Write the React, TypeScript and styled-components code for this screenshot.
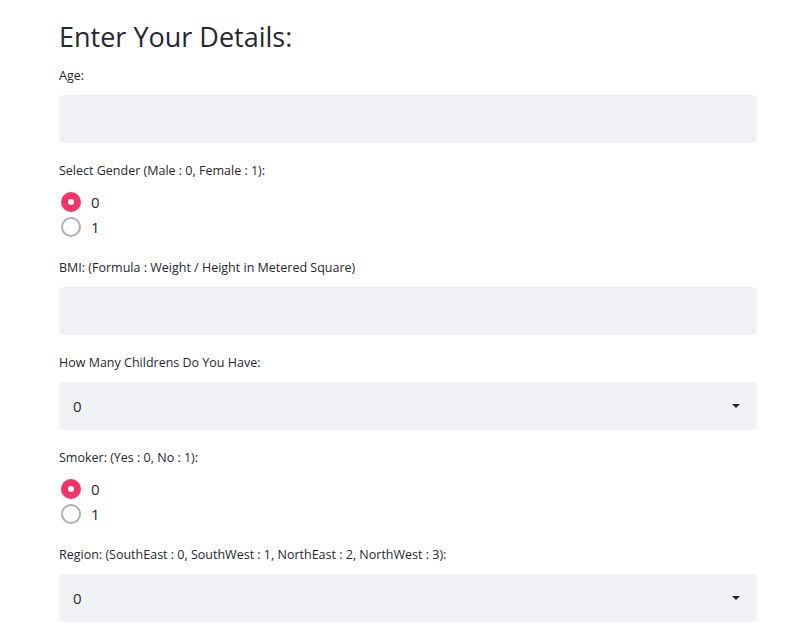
import React from "react";
import styled, { createGlobalStyle } from "styled-components";

const Global = createGlobalStyle`
  html, body { margin: 0; padding: 0; background: #ffffff; }
  body { font-family: "Open Sans", "Noto Sans", sans-serif; color: #262730; }
`;

const Page = styled.div`
  width: 698px;
  padding: 18px 0 0 59px;
  display: flex;
  flex-direction: column;
`;

const Heading = styled.h2`
  margin: 0 0 12px 0;
  font-size: 27px;
  font-weight: 400;
  line-height: 38px;
  letter-spacing: 0;
  color: #262730;
`;

const Field = styled.div`
  display: flex;
  flex-direction: column;
  margin-bottom: 20px;
`;

const Label = styled.label`
  font-size: 12.5px;
  line-height: 16px;
  color: #262730;
  margin-bottom: 11px;
`;

const Input = styled.div`
  height: 48px;
  background: #f0f2f6;
  border-radius: 4px;
`;

const Select = styled.div`
  height: 48px;
  background: #f0f2f6;
  border-radius: 4px;
  display: flex;
  align-items: center;
  justify-content: space-between;
  padding: 0 16px 0 14px;
  font-size: 15px;
  color: #262730;
`;

const Caret = styled.svg`
  width: 10px;
  height: 6px;
`;

const RadioGroup = styled.div`
  display: flex;
  flex-direction: column;
  gap: 5px;
  margin-top: 2px;
  margin-bottom: 3px;
`;

const RadioRow = styled.div`
  display: flex;
  align-items: center;
  height: 20px;
  padding-left: 2px;
  font-size: 15px;
  color: #262730;
`;

const Circle = styled.span<{ $checked: boolean }>`
  box-sizing: border-box;
  width: 20px;
  height: 20px;
  border-radius: 50%;
  margin-right: 10px;
  display: flex;
  align-items: center;
  justify-content: center;
  background: ${(p) => (p.$checked ? "#f63366" : "#ffffff")};
  border: ${(p) => (p.$checked ? "none" : "2px solid #b0b0b4")};
  &::after {
    content: "";
    display: ${(p) => (p.$checked ? "block" : "none")};
    width: 6px;
    height: 6px;
    border-radius: 50%;
    background: #ffffff;
  }
`;

const Radios = ({ checked }: { checked: number }) => (
  <RadioGroup>
    {[0, 1].map((v) => (
      <RadioRow key={v}>
        <Circle $checked={v === checked} />
        {v}
      </RadioRow>
    ))}
  </RadioGroup>
);

const Dropdown = ({ value }: { value: string }) => (
  <Select>
    <span>{value}</span>
    <Caret viewBox="0 0 10 6">
      <path d="M1 1 L9 1 L5 5 Z" fill="#262730" />
    </Caret>
  </Select>
);

export default function App() {
  return (
    <>
      <Global />
      <Page>
        <Heading>Enter Your Details:</Heading>
        <Field>
          <Label>Age:</Label>
          <Input />
        </Field>
        <Field>
          <Label>Select Gender (Male : 0, Female : 1):</Label>
          <Radios checked={0} />
        </Field>
        <Field>
          <Label>BMI: (Formula : Weight / Height in Metered Square)</Label>
          <Input />
        </Field>
        <Field>
          <Label>How Many Childrens Do You Have:</Label>
          <Dropdown value="0" />
        </Field>
        <Field>
          <Label>Smoker: (Yes : 0, No : 1):</Label>
          <Radios checked={0} />
        </Field>
        <Field>
          <Label>Region: (SouthEast : 0, SouthWest : 1, NorthEast : 2, NorthWest : 3):</Label>
          <Dropdown value="0" />
        </Field>
      </Page>
    </>
  );
}
